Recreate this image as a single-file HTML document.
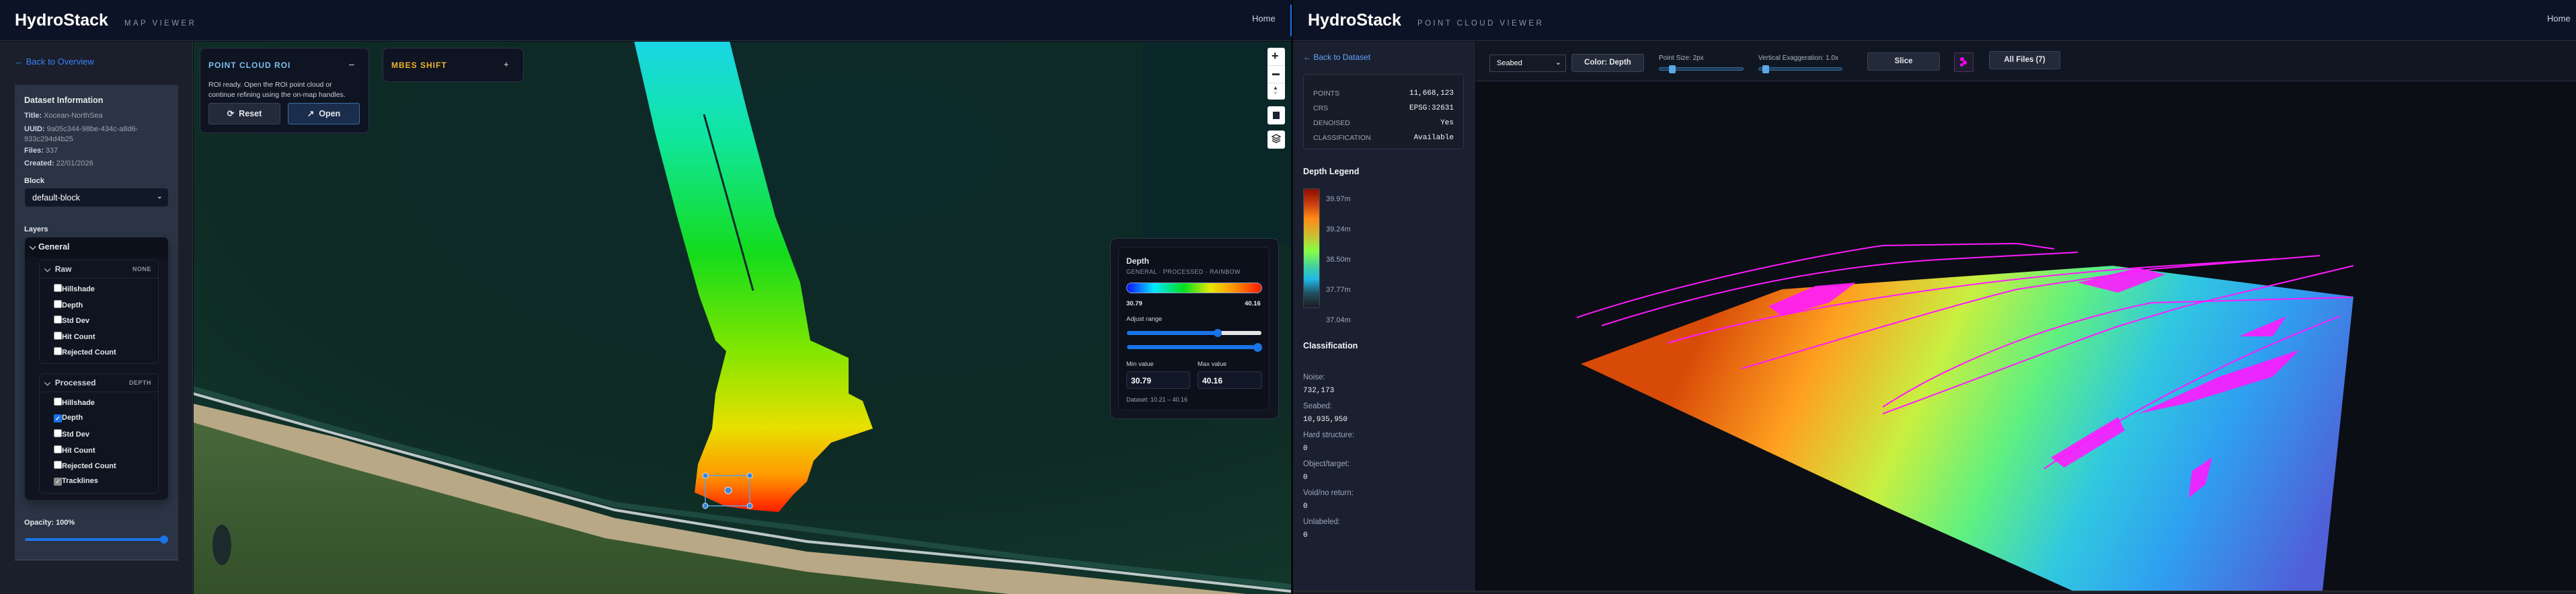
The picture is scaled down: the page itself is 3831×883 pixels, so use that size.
<!DOCTYPE html>
<html><head><meta charset="utf-8">
<style>
*{box-sizing:border-box;margin:0;padding:0}
body{width:3831px;height:883px;overflow:hidden;background:#0b0e14;font-family:"Liberation Sans",sans-serif;position:relative;color:#e5e7eb}
.a{position:absolute}
.hdr{background:#0d1326;border-bottom:1px solid #2a3244;height:61px}
.brand{font-weight:bold;font-size:25px;color:#fff;top:16px}
.sub{font-size:11.5px;letter-spacing:3.4px;color:#8b95a8;top:29px}
.home{font-size:13px;color:#cbd5e1;top:20px}
.cb{width:12px;height:12px;background:#fff;border:1px solid #999;border-radius:2px;display:inline-block;vertical-align:-1px}
.item{font-size:11px;color:#e5e7eb;font-weight:bold;left:80px}
.lbl{font-size:11px;color:#9ca3af}
.lbl b{color:#cbd5e1}
.btn{border:1px solid #3a4456;background:#232b3b;border-radius:3px;color:#e5e7eb;font-size:12.5px;font-weight:bold;text-align:center}
.mono{font-family:"Liberation Mono",monospace}
</style></head><body>

<!-- LEFT APP -->
<div class="a hdr" style="left:0;top:0;width:1920px"></div>
<div class="a brand" style="left:22px">HydroStack</div>
<div class="a sub" style="left:185px">MAP VIEWER</div>
<div class="a home" style="left:1862px">Home</div>

<div class="a" style="left:0;top:62px;width:287px;height:821px;background:#1a1f2b;border-right:1px solid #2a3244"></div>
<div class="a" style="left:22px;top:84px;font-size:13px;color:#3b82f6">← Back to Overview</div>
<div class="a" style="left:22px;top:126px;width:243px;height:707px;background:#2b3445;border-bottom:1px solid #475266"></div>
<div class="a" style="left:36px;top:142px;font-size:12.5px;font-weight:bold;color:#e5e7eb">Dataset Information</div>
<div class="a lbl" style="left:36px;top:166px"><b>Title:</b> Xocean-NorthSea</div>
<div class="a lbl" style="left:36px;top:185px;line-height:15px"><b>UUID:</b> 9a05c344-98be-434c-a8d6-<br>933c294d4b25</div>
<div class="a lbl" style="left:36px;top:218px"><b>Files:</b> 337</div>
<div class="a lbl" style="left:36px;top:237px"><b>Created:</b> 22/01/2026</div>
<div class="a" style="left:36px;top:263px;font-size:11px;font-weight:bold;color:#e5e7eb">Block</div>
<div class="a" style="left:37px;top:280px;width:213px;height:27px;background:#111827;border-radius:4px;font-size:12.5px;color:#fff;padding:7px 11px">default-block<span style="position:absolute;right:8px;top:5px;font-size:11px">⌄</span></div>
<div class="a" style="left:36px;top:335px;font-size:11px;font-weight:bold;color:#e5e7eb">Layers</div>
<div class="a" style="left:37px;top:353px;width:213px;height:390px;background:#0f1420;border-radius:7px;box-shadow:0 6px 14px rgba(0,0,0,.35)"></div>
<div class="a" style="left:37px;top:353px;width:213px;height:29px;background:#0b101a;border-radius:7px 7px 0 0"></div>
<div class="a" style="left:44px;top:360px;font-size:12.5px;font-weight:bold;color:#e5e7eb">⌵ General</div>
<div class="a" style="left:58px;top:386px;width:178px;height:155px;border:1px solid #1f2736;border-radius:7px"></div>
<div class="a" style="left:58px;top:413px;width:178px;height:1px;background:#1f2736"></div>
<div class="a" style="left:66px;top:393px;font-size:12px;font-weight:bold;color:#d1d5db">⌵ &nbsp;Raw</div>
<div class="a" style="left:197px;top:395px;font-size:9px;font-weight:bold;color:#8b95a8;letter-spacing:.5px">NONE</div>
<div class="a item" style="top:422px"><span class="cb"></span>Hillshade</div>
<div class="a item" style="top:446px"><span class="cb"></span>Depth</div>
<div class="a item" style="top:469px"><span class="cb"></span>Std Dev</div>
<div class="a item" style="top:493px"><span class="cb"></span>Hit Count</div>
<div class="a item" style="top:516px"><span class="cb"></span>Rejected Count</div>
<div class="a" style="left:58px;top:555px;width:178px;height:179px;border:1px solid #1f2736;border-radius:7px"></div>
<div class="a" style="left:58px;top:582px;width:178px;height:1px;background:#1f2736"></div>
<div class="a" style="left:66px;top:562px;font-size:12px;font-weight:bold;color:#d1d5db">⌵ &nbsp;Processed</div>
<div class="a" style="left:192px;top:564px;font-size:9px;font-weight:bold;color:#8b95a8;letter-spacing:.5px">DEPTH</div>
<div class="a item" style="top:591px"><span class="cb"></span>Hillshade</div>
<div class="a item" style="top:615px"><span class="cb" style="background:#1a73e8;border-color:#1a73e8;color:#fff;font-size:9px;line-height:10px;text-align:center">✓</span>Depth</div>
<div class="a item" style="top:638px"><span class="cb"></span>Std Dev</div>
<div class="a item" style="top:662px"><span class="cb"></span>Hit Count</div>
<div class="a item" style="top:685px"><span class="cb"></span>Rejected Count</div>
<div class="a item" style="top:709px"><span class="cb" style="background:#888;border-color:#888;color:#ddd;font-size:9px;line-height:10px;text-align:center">✓</span>Tracklines</div>
<div class="a" style="left:36px;top:771px;font-size:11px;font-weight:bold;color:#e5e7eb">Opacity: 100%</div>
<div class="a" style="left:37px;top:800px;width:208px;height:4px;background:#1a73e8;border-radius:2px"></div>
<div class="a" style="left:238px;top:796px;width:12px;height:12px;background:#1a73e8;border-radius:50%"></div>

<!-- MAP -->
<svg class="a" style="left:288px;top:62px" width="1632" height="821" viewBox="288 62 1632 821">
<defs>
<radialGradient id="sea" cx="0.6" cy="0.2" r="0.9"><stop offset="0" stop-color="#0c2a2a"/><stop offset="0.6" stop-color="#0e2a24"/><stop offset="1" stop-color="#12372b"/></radialGradient>
<linearGradient id="strip" x1="0" y1="61" x2="0" y2="762" gradientUnits="userSpaceOnUse">
<stop offset="0" stop-color="#1ad6e6"/><stop offset="0.2" stop-color="#10e6a0"/><stop offset="0.45" stop-color="#14dc1c"/><stop offset="0.65" stop-color="#7ee600"/><stop offset="0.82" stop-color="#e8e000"/><stop offset="0.92" stop-color="#ff9a00"/><stop offset="1" stop-color="#ff1a00"/></linearGradient>
<linearGradient id="land" x1="0" y1="600" x2="0" y2="883" gradientUnits="userSpaceOnUse"><stop offset="0" stop-color="#4a6a3c"/><stop offset="1" stop-color="#33502a"/></linearGradient>
</defs>
<rect x="288" y="62" width="1632" height="821" fill="url(#sea)"/>
<rect x="1700" y="62" width="220" height="300" fill="#07262c" opacity=".6"/>
<path d="M287,600 L500,650 L914,770 L1200,820 L1537,850 L1920,890 L1920,883 L287,883Z" fill="#b8a886"/>
<path d="M287,628 L500,690 L900,800 L1200,850 L1500,883 L287,883Z" fill="url(#land)"/>
<path d="M287,585 L500,645 L914,758 L1200,805 L1537,837 L1920,879" stroke="#e8eef0" stroke-width="4" fill="none" opacity=".8"/>
<path d="M287,578 L500,638 L914,750 L1537,830 L1920,872" stroke="#3a7a70" stroke-width="8" fill="none" opacity=".35"/>
<ellipse cx="330" cy="810" rx="14" ry="30" fill="#1c2a2c"/>
<path d="M943,61 L975,200 L1007,322 L1040,440 L1064,506 L1080,522 L1064,585 L1059,637 L1038,690 L1033,732 L1080,753 L1120,758 L1158,761 L1180,735 L1200,716 L1210,685 L1236,658 L1298,637 L1283,596 L1262,585 L1262,532 L1205,506 L1190,420 L1153,322 L1111,165 L1085,61Z" fill="url(#strip)"/>
<path d="M1047,170 L1120,432" stroke="#0d2a2a" stroke-width="3"/>
<rect x="1049" y="707" width="66" height="45" fill="none" stroke="#5aa0e0" stroke-width="1.5"/>
<g fill="#3a86d8" stroke="#cfe3ff" stroke-width="1"><circle cx="1049" cy="707" r="4"/><circle cx="1115" cy="707" r="4"/><circle cx="1049" cy="752" r="4"/><circle cx="1115" cy="752" r="4"/><circle cx="1083" cy="729" r="5"/></g>
</svg>

<!-- ROI panel -->
<div class="a" style="left:297px;top:71px;width:252px;height:127px;background:#0e1422;border:1px solid #2b3447;border-radius:8px"></div>
<div class="a" style="left:310px;top:90px;font-size:12px;font-weight:bold;color:#7cc0ec;letter-spacing:1px">POINT CLOUD ROI</div>
<div class="a" style="left:519px;top:87px;font-size:14px;color:#e5e7eb">–</div>
<div class="a" style="left:310px;top:119px;font-size:10.5px;color:#c9d1d9;line-height:14.5px">ROI ready. Open the ROI point cloud or<br>continue refining using the on-map handles.</div>
<div class="a btn" style="left:310px;top:153px;width:107px;height:32px;line-height:30px">⟳ &nbsp;Reset</div>
<div class="a btn" style="left:428px;top:153px;width:107px;height:32px;line-height:30px;background:#1a2d4a;border-color:#3b6ea5">↗ &nbsp;Open</div>
<!-- MBES -->
<div class="a" style="left:569px;top:71px;width:210px;height:51px;background:#0e1422;border:1px solid #2b3447;border-radius:8px"></div>
<div class="a" style="left:582px;top:90px;font-size:12px;font-weight:bold;color:#f0b429;letter-spacing:1px">MBES SHIFT</div>
<div class="a" style="left:749px;top:88px;font-size:13px;color:#e5e7eb">+</div>

<!-- map controls -->
<div class="a" style="left:1885px;top:71px;width:26px;height:77px;background:#fff;border-radius:3px"></div>
<div class="a" style="left:1885px;top:97px;width:26px;height:1px;background:#ddd"></div>
<div class="a" style="left:1885px;top:123px;width:26px;height:1px;background:#ddd"></div>
<div class="a" style="left:1891px;top:73px;font-size:18px;font-weight:bold;color:#222">+</div>
<div class="a" style="left:1892px;top:109px;width:11px;height:3px;background:#333"></div>
<div class="a" style="left:1893px;top:127px;font-size:8px;color:#333;line-height:8px">▲<br><span style="color:#bbb">▼</span></div>
<div class="a" style="left:1885px;top:158px;width:26px;height:27px;background:#fff;border-radius:3px"></div>
<div class="a" style="left:1893px;top:166px;width:10px;height:11px;background:#1d2233"></div>
<div class="a" style="left:1885px;top:194px;width:26px;height:27px;background:#fff;border-radius:3px"></div>
<svg class="a" style="left:1891px;top:199px" width="14" height="16" viewBox="0 0 14 16"><path d="M7 1 L13 4 L7 7 L1 4Z M1 7 L7 10 L13 7 M1 10 L7 13 L13 10" fill="none" stroke="#222" stroke-width="1.3"/></svg>

<!-- depth panel -->
<div class="a" style="left:1651px;top:354px;width:251px;height:269px;background:#0f141e;border:1px solid #2b3447;border-radius:9px"></div>
<div class="a" style="left:1663px;top:367px;width:225px;height:243px;background:#0b101b;border:1px solid #1f2736;border-radius:7px"></div>
<div class="a" style="left:1675px;top:381px;font-size:12px;font-weight:bold;color:#e5e7eb">Depth</div>
<div class="a" style="left:1675px;top:399px;font-size:9px;color:#8b95a8;letter-spacing:.4px">GENERAL · PROCESSED · RAINBOW</div>
<div class="a" style="left:1675px;top:420px;width:202px;height:16px;border-radius:8px;border:1px solid #8899cc;background:linear-gradient(90deg,#1010ff,#00e8ff 20%,#00e020 42%,#e8e800 62%,#ff9000 80%,#ff1800)"></div>
<div class="a" style="left:1675px;top:446px;font-size:9.5px;font-weight:bold;color:#e5e7eb">30.79</div>
<div class="a" style="left:1851px;top:446px;font-size:9.5px;font-weight:bold;color:#e5e7eb">40.16</div>
<div class="a" style="left:1675px;top:469px;font-size:9.5px;color:#d1d5db">Adjust range</div>
<div class="a" style="left:1676px;top:492px;width:200px;height:6px;background:#e5e5e5;border-radius:3px"></div>
<div class="a" style="left:1676px;top:492px;width:135px;height:6px;background:#1a73e8;border-radius:3px"></div>
<div class="a" style="left:1805px;top:489px;width:12px;height:12px;background:#1a73e8;border-radius:50%"></div>
<div class="a" style="left:1676px;top:513px;width:198px;height:6px;background:#1a73e8;border-radius:3px"></div>
<div class="a" style="left:1864px;top:510px;width:13px;height:13px;background:#1a73e8;border-radius:50%"></div>
<div class="a" style="left:1675px;top:536px;font-size:9.5px;color:#d1d5db">Min value</div>
<div class="a" style="left:1781px;top:536px;font-size:9.5px;color:#d1d5db">Max value</div>
<div class="a" style="left:1675px;top:552px;width:95px;height:26px;border:1px solid #2b3447;border-radius:4px;background:#111827;font-size:12px;font-weight:bold;color:#fff;padding:6px 6px">30.79</div>
<div class="a" style="left:1781px;top:552px;width:96px;height:26px;border:1px solid #2b3447;border-radius:4px;background:#111827;font-size:12px;font-weight:bold;color:#fff;padding:6px 6px">40.16</div>
<div class="a" style="left:1675px;top:589px;font-size:9px;color:#9ca3af">Dataset: 10.21 – 40.16</div>

<!-- divider -->
<div class="a" style="left:1919px;top:7px;width:2px;height:47px;background:#1a73e8"></div>
<div class="a" style="left:1921px;top:0;width:2px;height:883px;background:#050709"></div>

<!-- RIGHT APP -->
<div class="a hdr" style="left:1923px;top:0;width:1908px"></div>
<div class="a brand" style="left:1945px">HydroStack</div>
<div class="a sub" style="left:2108px">POINT CLOUD VIEWER</div>
<div class="a home" style="left:3788px">Home</div>

<div class="a" style="left:1923px;top:62px;width:270px;height:816px;background:#1b2030;border-right:1px solid #2a3244"></div>
<div class="a" style="left:1938px;top:78px;font-size:12px;color:#60a5fa">← Back to Dataset</div>
<div class="a" style="left:1938px;top:110px;width:239px;height:112px;border:1px solid #2e3648;border-radius:5px;background:#171c29"></div>
<div class="a" style="left:1953px;top:128px;font-size:10.5px;color:#9ca3af;line-height:22px">POINTS<br>CRS<br>DENOISED<br>CLASSIFICATION</div>
<div class="a mono" style="left:2040px;top:128px;width:122px;text-align:right;font-size:11px;color:#f3f4f6;line-height:22px">11,668,123<br>EPSG:32631<br>Yes<br>Available</div>
<div class="a" style="left:1938px;top:248px;font-size:12.5px;font-weight:bold;color:#f3f4f6">Depth Legend</div>
<div class="a" style="left:1938px;top:280px;width:25px;height:178px;border:1px solid #3a4456;border-radius:3px;background:linear-gradient(180deg,#8a0e00,#c83c10 12%,#ff8a18 25%,#c8c030 40%,#88ff44 52%,#40d0a0 66%,#20b8e8 76%,#205060 88%,#1d1a20)"></div>
<div class="a" style="left:1972px;top:274px;font-size:11px;color:#9ca8c0;line-height:45px">39.97m<br>39.24m<br>38.50m<br>37.77m<br>37.04m</div>
<div class="a" style="left:1938px;top:507px;font-size:12.5px;font-weight:bold;color:#f3f4f6">Classification</div>
<div class="a" style="left:1938px;top:540px;font-size:11.5px;color:#9aa6bd;line-height:43px">Noise:<br>Seabed:<br>Hard structure:<br>Object/target:<br>Void/no return:<br>Unlabeled:</div>
<div class="a mono" style="left:1938px;top:560px;font-size:11px;color:#f3f4f6;line-height:43px">732,173<br>10,935,950<br>0<br>0<br>0<br>0</div>
<div class="a" style="left:1923px;top:878px;width:1908px;height:5px;background:#1b1f27;border-top:1px solid #333"></div>

<!-- toolbar -->
<div class="a" style="left:2194px;top:62px;width:1637px;height:59px;background:#111722;border-bottom:1px solid #2a3244"></div>
<div class="a" style="left:2215px;top:81px;width:114px;height:26px;border:1px solid #3a4456;background:#131a26;border-radius:2px;font-size:11px;color:#fff;padding:6px 10px">Seabed<span style="position:absolute;right:6px;top:4px">⌄</span></div>
<div class="a btn" style="left:2337px;top:80px;width:108px;height:27px;line-height:25px;font-size:11.5px">Color: Depth</div>
<div class="a" style="left:2467px;top:81px;font-size:10px;color:#aab4c8">Point Size: 2px</div>
<div class="a" style="left:2467px;top:100px;width:126px;height:5px;background:#1d3a5a;border:1px solid #3a6a9a;border-radius:3px"></div>
<div class="a" style="left:2482px;top:97px;width:10px;height:12px;background:#5aa8e8;border-radius:2px"></div>
<div class="a" style="left:2615px;top:81px;font-size:10px;color:#aab4c8">Vertical Exaggeration: 1.0x</div>
<div class="a" style="left:2615px;top:100px;width:125px;height:5px;background:#1d3a5a;border:1px solid #3a6a9a;border-radius:3px"></div>
<div class="a" style="left:2621px;top:97px;width:10px;height:12px;background:#5aa8e8;border-radius:2px"></div>
<div class="a btn" style="left:2777px;top:78px;width:108px;height:27px;line-height:25px;font-size:11.5px">Slice</div>
<div class="a" style="left:2906px;top:78px;width:29px;height:29px;border:1px solid #5a2a6a;background:#1a1f2b;border-radius:2px"></div>
<div class="a" style="left:2915px;top:85px;width:6px;height:6px;background:#ff00ff;border-radius:50%"></div>
<div class="a" style="left:2919px;top:90px;width:6px;height:6px;background:#ff00ff;border-radius:50%"></div>
<div class="a" style="left:2915px;top:94px;width:5px;height:5px;background:#ff00ff;border-radius:50%"></div>
<div class="a btn" style="left:2958px;top:76px;width:106px;height:27px;line-height:25px;font-size:11.5px">All Files (7)</div>

<!-- point cloud -->
<svg class="a" style="left:2194px;top:122px" width="1637" height="756" viewBox="2194 122 1637 756">
<defs>
<linearGradient id="pc" x1="2550" y1="450" x2="3420" y2="860" gradientUnits="userSpaceOnUse">
<stop offset="0" stop-color="#d84a08"/><stop offset="0.18" stop-color="#ffa020"/><stop offset="0.35" stop-color="#c8f040"/><stop offset="0.5" stop-color="#60f080"/><stop offset="0.65" stop-color="#30c8e0"/><stop offset="0.8" stop-color="#2fa0f0"/><stop offset="1" stop-color="#5060d8"/></linearGradient>
</defs>
<rect x="2194" y="122" width="1637" height="756" fill="#0b0e14"/>
<path d="M2351,541 L2650,430 L3142,395 L3500,441 L3454,879 L3084,879 L2803,753Z" fill="url(#pc)"/>
<g fill="none" stroke="#ff1aff" stroke-width="2">
<path d="M2345,472 C2500,420 2700,380 2800,365 L3000,362 L3055,370"/>
<path d="M2382,484 C2520,440 2700,395 2900,385 L3090,375"/>
<path d="M2480,510 C2650,460 2900,420 3180,398 L3385,385"/>
<path d="M2590,548 C2750,500 2900,455 3000,430 L3200,400 L3450,380"/>
<path d="M2800,615 C2950,560 3050,520 3150,485 L3250,455 L3500,395"/>
<path d="M2800,605 C2900,540 3050,480 3200,450 L3497,442"/>
<path d="M3040,697 C3150,620 3300,540 3480,470"/>
</g>
<g fill="#ff1aff" opacity=".9">
<path d="M2630,455 L2700,425 L2760,420 L2720,450 L2650,470Z"/>
<path d="M3090,420 L3180,398 L3220,408 L3150,435Z"/>
<path d="M3180,615 L3300,560 L3420,520 L3380,560 L3250,600Z"/>
<path d="M3050,680 L3150,620 L3160,640 L3070,695Z"/>
<path d="M3330,500 L3400,470 L3380,500Z"/>
<path d="M3260,700 L3290,680 L3280,720 L3255,740Z"/>
</g>
</svg>

</body></html>
